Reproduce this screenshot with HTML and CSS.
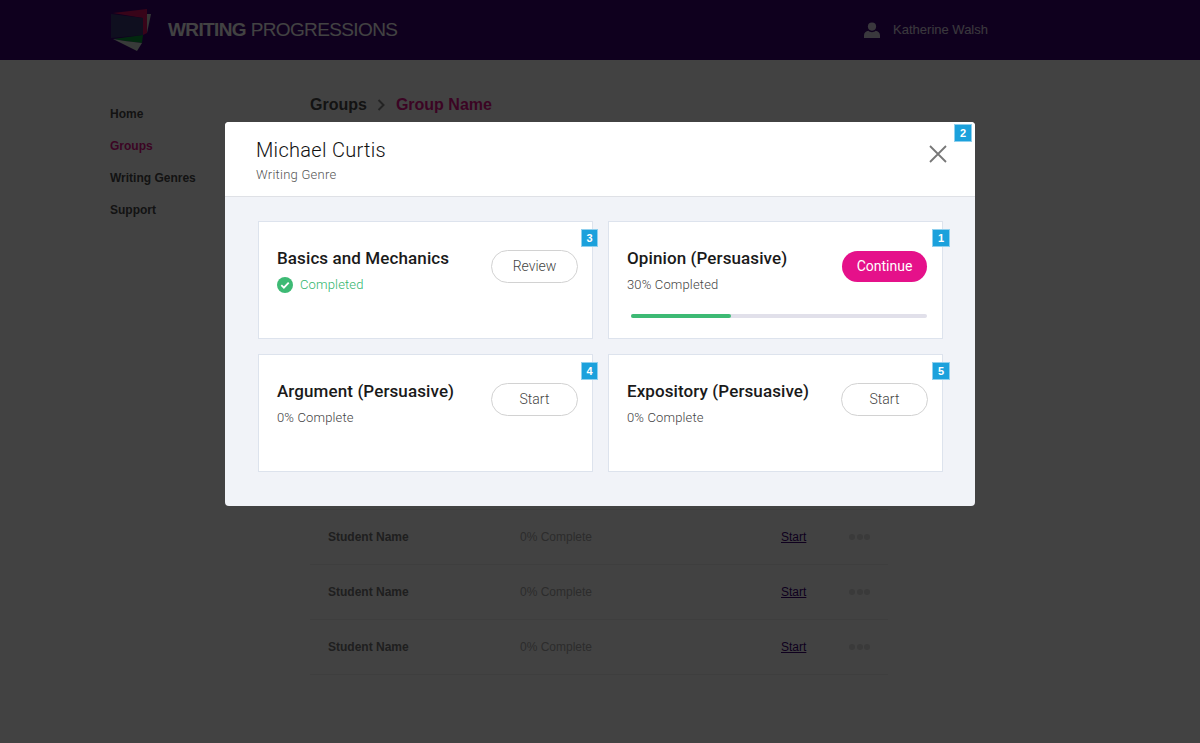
FILE: index.html
```html
<!doctype html>
<html lang="en">
<head>
    <meta charset="UTF-8">
    <link rel="stylesheet" href="styles.css">
    <title>Writing Progressions</title>
</head>
<body>
<header class="topbar">
    <div class="brand">
        <svg class="logo" viewBox="0 0 42 46" width="42" height="46">
            <polygon points="3,6 37,2 37,26 33,28 33,11" fill="#d81060"/>
            <polygon points="37,7 41,7 37,26" fill="#c8d4d0"/>
            <polygon points="1,7 33,11 33,28 1,31" fill="#3c3a78"/>
            <polygon points="3,32 33,28 32,36 15,34" fill="#0a9a3c"/>
            <polygon points="3,32 27,44 32,36 15,34" fill="#d8e4dc"/>
        </svg>
        <span class="brand-name"><b>WRITING</b> PROGRESSIONS</span>
    </div>
    <div class="user">
        <svg class="user-icon" viewBox="0 0 16 16" width="16" height="16">
            <circle cx="8" cy="4.600" r="4.100"/>
            <path d="M0 16v-2.600c0-2.600 2-4.200 4.400-4.600 1 1 2.200 1.400 3.600 1.400s2.600-.4 3.600-1.400c2.400.4 4.400 2 4.400 4.600V16z"/>
        </svg>
        <span class="user-name">Katherine Walsh</span>
    </div>
</header>

<div class="page">
    <nav class="sidenav">
        <a href="#">Home</a>
        <a href="#" class="current">Groups</a>
        <a href="#">Writing Genres</a>
        <a href="#">Support</a>
    </nav>
    <main class="main">
        <div class="crumbs">
            <span>Groups</span>
            <svg class="crumb-arrow" viewBox="0 0 8 12" width="8" height="12"><path d="M1.500 1l5 5-5 5"/></svg>
            <span class="current">Group Name</span>
        </div>
        <ul class="students">
            <li><b>Student Name</b><span class="progress-text">0% Complete</span><a href="#">Start</a><span class="dots"><i></i><i></i><i></i></span></li>
            <li><b>Student Name</b><span class="progress-text">0% Complete</span><a href="#">Start</a><span class="dots"><i></i><i></i><i></i></span></li>
            <li><b>Student Name</b><span class="progress-text">0% Complete</span><a href="#">Start</a><span class="dots"><i></i><i></i><i></i></span></li>
        </ul>
    </main>
</div>

<div class="overlay">
    <div class="modal">
        <div class="modal-head">
            <h1>Michael Curtis</h1>
            <p>Writing Genre</p>
            <svg class="close" viewBox="0 0 18 18" width="18" height="18"><path d="M1 1l16 16M17 1L1 17"/></svg>
            <span class="badge badge-close">2</span>
        </div>
        <div class="modal-body">
            <section class="card">
                <span class="badge">3</span>
                <div class="card-top">
                    <div>
                        <h2>Basics and Mechanics</h2>
                        <div class="status done">
                            <svg viewBox="0 0 16 16" width="16" height="16">
                                <circle cx="8" cy="8" r="8" fill="#3dba74"/>
                                <path d="M4.300 8.200l2.600 2.500 4.800-5" fill="none" stroke="#fff" stroke-width="1.800"/>
                            </svg>
                            Completed
                        </div>
                    </div>
                    <button class="btn">Review</button>
                </div>
            </section>
            <section class="card">
                <span class="badge">1</span>
                <div class="card-top">
                    <div>
                        <h2>Opinion (Persuasive)</h2>
                        <div class="status">30% Completed</div>
                    </div>
                    <button class="btn primary">Continue</button>
                </div>
                <div class="bar"><div class="bar-fill" style="width: 33.8%"></div></div>
            </section>
            <section class="card">
                <span class="badge">4</span>
                <div class="card-top">
                    <div>
                        <h2>Argument (Persuasive)</h2>
                        <div class="status">0% Complete</div>
                    </div>
                    <button class="btn">Start</button>
                </div>
            </section>
            <section class="card">
                <span class="badge">5</span>
                <div class="card-top">
                    <div>
                        <h2>Expository (Persuasive)</h2>
                        <div class="status">0% Complete</div>
                    </div>
                    <button class="btn">Start</button>
                </div>
            </section>
        </div>
    </div>
</div>
</body>
</html>
```

FILE: styles.css
```css
* {
    box-sizing: border-box;
}

body {
    margin: 0;
    background: #fff;
    color: #4a4a4a;
    font-family: "Liberation Sans", Arial, sans-serif;
    overflow: hidden;
}

.topbar {
    height: 60px;
    background: #3b0076;
    display: flex;
    justify-content: space-between;
    align-items: center;
    padding: 0 212px 0 110px;
    color: #fff;
}

.brand {
    display: flex;
    align-items: center;
    gap: 16px;
}

.logo {
    overflow: visible;
}

.brand-name {
    font-size: 19px;
    letter-spacing: -0.62px;
}

.user {
    display: flex;
    align-items: center;
    gap: 13px;
    font-size: 13px;
    opacity: 0.85;
}

.user-name {
    padding-bottom: 2px;
}

.user-icon {
    fill: #fff;
}

.page {
    display: flex;
    padding-left: 110px;
}

.sidenav {
    width: 200px;
    padding-top: 46px;
    display: flex;
    flex-direction: column;
    gap: 16px;
}

.sidenav a {
    color: #4a4a4a;
    font-size: 12px;
    line-height: 16px;
    font-weight: bold;
    text-decoration: none;
}

.sidenav a.current,
.crumbs .current {
    color: #e5118a;
}

.main {
    width: 578px;
}

.crumbs {
    display: flex;
    align-items: center;
    gap: 10.5px;
    padding-top: 35px;
    font-size: 16px;
    line-height: 20px;
    font-weight: bold;
}

.crumb-arrow {
    fill: none;
    stroke: #888;
    stroke-width: 2;
}

.students {
    list-style: none;
    margin: 394px 0 0;
    padding: 0;
    border-top: 1px solid #eee;
}

.students li {
    height: 55px;
    display: flex;
    align-items: center;
    padding: 0 18px;
    border-bottom: 1px solid #eee;
    font-size: 12px;
}

.students b {
    width: 192px;
    color: #777;
}

.progress-text {
    width: 261px;
    color: #aaa;
}

.students a {
    width: 68px;
    color: #3b0076;
}

.dots {
    display: flex;
    gap: 1.500px;
}

.dots i {
    width: 6px;
    height: 6px;
    border-radius: 50%;
    background: #dedede;
}

.overlay {
    position: fixed;
    inset: 0;
    background: rgba(0, 0, 0, 0.74);
    display: flex;
    justify-content: center;
    align-items: flex-start;
    padding-top: 122px;
}

.modal {
    width: 750px;
    height: 384px;
    background: #f1f3f8;
    border-radius: 4px;
    font-family: Roboto, sans-serif;
}

.modal-head {
    position: relative;
    height: 75px;
    background: #fff;
    border-bottom: 1px solid #dfe1e6;
    border-radius: 4px 4px 0 0;
    padding: 16px 31px 0;
}

.modal-head h1 {
    margin: 0;
    font-size: 20px;
    line-height: 24px;
    font-weight: 300;
    color: #111;
    letter-spacing: 0.3px;
}

.modal-head p {
    margin: 5px 0 0;
    font-size: 13px;
    line-height: 16px;
    font-weight: 300;
    color: #555;
    letter-spacing: 0.25px;
}

.close {
    position: absolute;
    top: 23px;
    right: 28px;
    fill: none;
    stroke: #777;
    stroke-width: 1.8;
}

.badge {
    position: absolute;
    top: 7px;
    right: -6px;
    width: 17px;
    height: 18px;
    background: #1ba1dc;
    border: 1px solid #8fd0ee;
    color: #fff;
    font-family: "Liberation Sans", Arial, sans-serif;
    font-size: 11px;
    line-height: 16px;
    font-weight: 700;
    text-align: center;
}

.card:nth-child(even) .badge {
    right: -8px;
    width: 18px;
}

.badge-close {
    top: 2px;
    right: 3px;
    width: 18px;
}

.modal-body {
    display: grid;
    grid-template-columns: 335px 335px;
    grid-auto-rows: 118px;
    gap: 15px;
    padding: 24px 32px 0 33px;
}

.card {
    position: relative;
    background: #fff;
    border: 1px solid #dde3ed;
    padding: 27px 14px 0 18px;
}

.card-top {
    display: flex;
    justify-content: space-between;
    align-items: flex-start;
}

.card h2 {
    margin: 0;
    font-size: 17px;
    line-height: 19px;
    font-weight: 500;
    color: #1a1a1a;
    letter-spacing: 0.1px;
}

.status {
    display: flex;
    align-items: center;
    gap: 7px;
    margin-top: 8px;
    font-size: 13px;
    line-height: 18px;
    font-weight: 300;
    color: #444;
    letter-spacing: 0.15px;
}

.status.done {
    color: #2fb56c;
}

.btn {
    width: 87px;
    height: 33px;
    margin-top: 1px;
    padding: 0 0 2px;
    background: #fff;
    border: 1px solid #d2d2d2;
    border-radius: 17px;
    color: #444;
    font-family: Roboto, sans-serif;
    font-size: 14px;
    font-weight: 300;
}

.btn.primary {
    width: 85px;
    height: 31px;
    margin: 2px 1px 0 0;
    background: #e5118a;
    border: 0;
    color: #fff;
    font-weight: 400;
}

.bar {
    height: 4px;
    margin: 20px 1px 0 4px;
    background: #e1e0ea;
    border-radius: 2px;
}

.bar-fill {
    height: 4px;
    background: #3dba74;
    border-radius: 2px;
}
```
